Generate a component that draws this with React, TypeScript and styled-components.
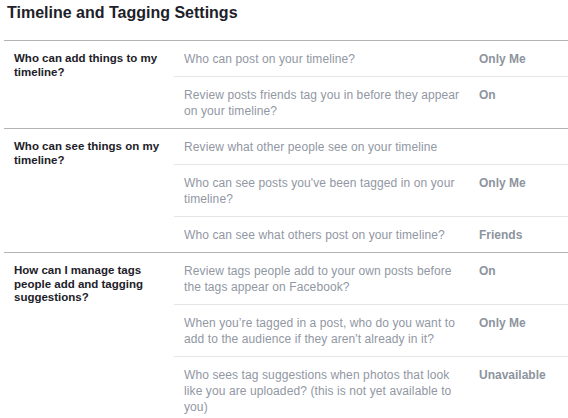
import React from "react";
import styled, { createGlobalStyle } from "styled-components";

const GlobalStyle = createGlobalStyle`
  body {
    margin: 0;
    background: #fff;
    font-family: "Liberation Sans", Arial, Helvetica, sans-serif;
  }
`;

const Page = styled.div`
  padding: 3px 0 0 4px;
`;

const Title = styled.h2`
  margin: 0 0 17px;
  padding-left: 3px;
  font-size: 16px;
  line-height: 20px;
  font-weight: bold;
  color: #1d2129;
`;

const Section = styled.section`
  display: grid;
  grid-template-columns: 170px 1fr;
  border-top: 1px solid #b4b4b4;
`;

const Label = styled.div`
  padding: 11px 4px 0 10px;
  font-size: 11.5px;
  line-height: 13.5px;
  font-weight: bold;
  color: #1d2129;
`;

const Rows = styled.div`
  display: flex;
  flex-direction: column;
`;

const Row = styled.div<{ $first?: boolean }>`
  display: grid;
  grid-template-columns: 295px 1fr;
  padding: 10px 10px 9px;
  border-top: ${(p) => (p.$first ? "none" : "1px solid #e5e6e9")};
  font-size: 12px;
  line-height: 16px;
`;

const Desc = styled.div`
  padding-right: 13px;
  letter-spacing: 0.1px;
  color: #9197a3;
`;

const Value = styled.div`
  font-weight: bold;
  color: #8d949e;
`;

type Item = { text: string; value?: string };

const sections: { label: string; items: Item[] }[] = [
  {
    label: "Who can add things to my timeline?",
    items: [
      { text: "Who can post on your timeline?", value: "Only Me" },
      {
        text: "Review posts friends tag you in before they appear on your timeline?",
        value: "On",
      },
    ],
  },
  {
    label: "Who can see things on my timeline?",
    items: [
      { text: "Review what other people see on your timeline" },
      {
        text: "Who can see posts you've been tagged in on your timeline?",
        value: "Only Me",
      },
      { text: "Who can see what others post on your timeline?", value: "Friends" },
    ],
  },
  {
    label: "How can I manage tags people add and tagging suggestions?",
    items: [
      {
        text: "Review tags people add to your own posts before the tags appear on Facebook?",
        value: "On",
      },
      {
        text: "When you\u2019re tagged in a post, who do you want to add to the audience if they aren't already in it?",
        value: "Only Me",
      },
      {
        text: "Who sees tag suggestions when photos that look like you are uploaded? (this is not yet available to you)",
        value: "Unavailable",
      },
    ],
  },
];

export default function App() {
  return (
    <Page>
      <GlobalStyle />
      <Title>Timeline and Tagging Settings</Title>
      {sections.map((s, i) => (
        <Section key={i}>
          <Label>{s.label}</Label>
          <Rows>
            {s.items.map((item, j) => (
              <Row key={j} $first={j === 0}>
                <Desc>{item.text}</Desc>
                <Value>{item.value}</Value>
              </Row>
            ))}
          </Rows>
        </Section>
      ))}
    </Page>
  );
}
